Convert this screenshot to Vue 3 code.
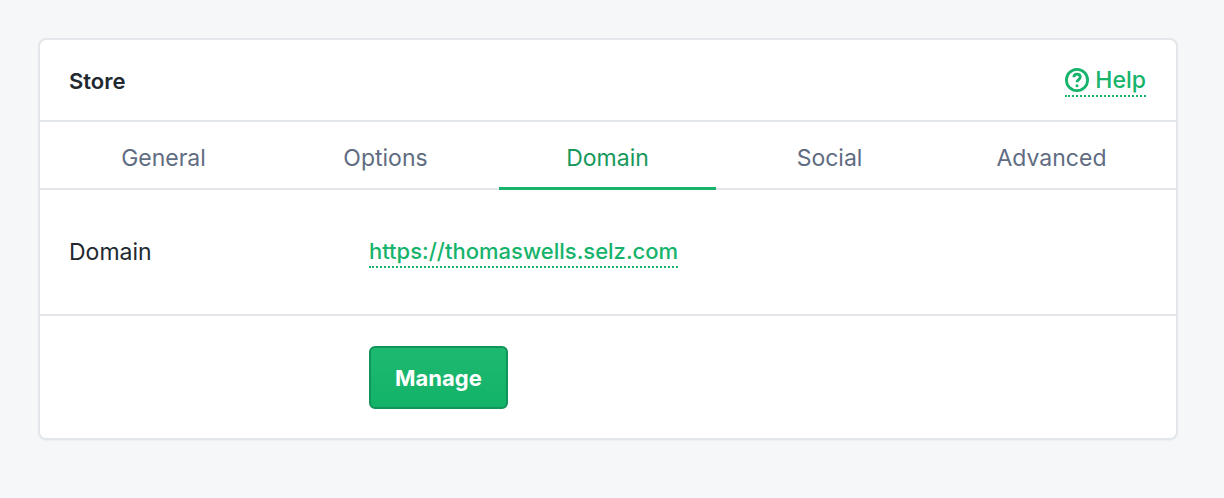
<script setup>
const tabs = ['General', 'Options', 'Domain', 'Social', 'Advanced']
</script>

<template>
  <main class="page">
    <section class="card">
      <header class="head">
        <h1>Store</h1>
        <a class="link help" href="#help">
          <svg viewBox="0 0 24 24" aria-hidden="true">
            <circle cx="12" cy="12" r="10.6" />
            <path d="M8.9 9.3C8.9 7.3 10.2 6.2 12 6.2s3.3 1.1 3.3 2.9c0 2.4-3.3 2.5-3.3 5.1" />
            <circle class="dot" cx="12" cy="17.7" r="1.5" />
          </svg>
          <span>Help</span>
        </a>
      </header>
      <nav class="tabs">
        <a v-for="tab in tabs" :key="tab" href="#" :class="{ active: tab === 'Domain' }">{{ tab }}</a>
      </nav>
      <div class="row">
        <span class="label">Domain</span>
        <a class="link url" href="#domain">https://thomaswells.selz.com</a>
      </div>
      <footer class="foot">
        <button type="button">Manage</button>
      </footer>
    </section>
  </main>
</template>

<style>
body {
  background: #f6f7f9;
}
</style>

<style scoped>
.page {
  padding: 38px 46px 58px 38px;
  font: 23px/32px Inter, sans-serif;
  color: #212830;
}
.card {
  border: 2px solid #e3e7eb;
  border-radius: 8px;
  background: #fff;
  box-shadow: 0 1px 2px rgba(0, 0, 0, 0.04);
}
.head {
  display: flex;
  align-items: center;
  justify-content: space-between;
  box-sizing: border-box;
  height: 82px;
  padding: 2px 30px 0 29px;
  border-bottom: 2px solid #e3e7eb;
}
h1 {
  margin: 0;
  font-size: 22px;
  font-weight: 600;
}
.link {
  color: #16b36b;
  font-weight: 500;
  line-height: 30px;
  text-decoration: none;
  border-bottom: 2px dotted #16b36b;
}
.help {
  display: flex;
  align-items: center;
  gap: 6px;
}
.url {
  font-size: 22px;
}
svg {
  width: 24px;
  height: 24px;
  fill: none;
  stroke: #16b36b;
  stroke-width: 2.8;
}
.dot {
  fill: #16b36b;
  stroke: none;
}
.tabs {
  display: grid;
  grid-template-columns: repeat(5, 1fr);
  gap: 5px;
  padding: 0 16px 0 15px;
  border-bottom: 2px solid #e3e7eb;
}
.tabs a {
  margin-bottom: -2px;
  padding: 20px 0 13px;
  border-bottom: 3px solid #0000;
  color: #5f6c82;
  text-align: center;
  text-decoration: none;
}
.tabs .active {
  border-color: #16b36b;
  color: #16985d;
}
.row {
  display: grid;
  grid-template-columns: 300px 1fr;
  align-items: center;
  justify-items: start;
  height: 124px;
  padding: 0 30px 0 29px;
  border-bottom: 2px solid #e3e7eb;
}
.foot {
  padding: 30px 30px 29px 329px;
}
button {
  display: block;
  height: 63px;
  padding: 0 24px;
  border: 2px solid #119459;
  border-radius: 6px;
  background: linear-gradient(#1eb970, #12b368);
  color: #fff;
  font: 700 22px/32px Inter, sans-serif;
}
</style>
